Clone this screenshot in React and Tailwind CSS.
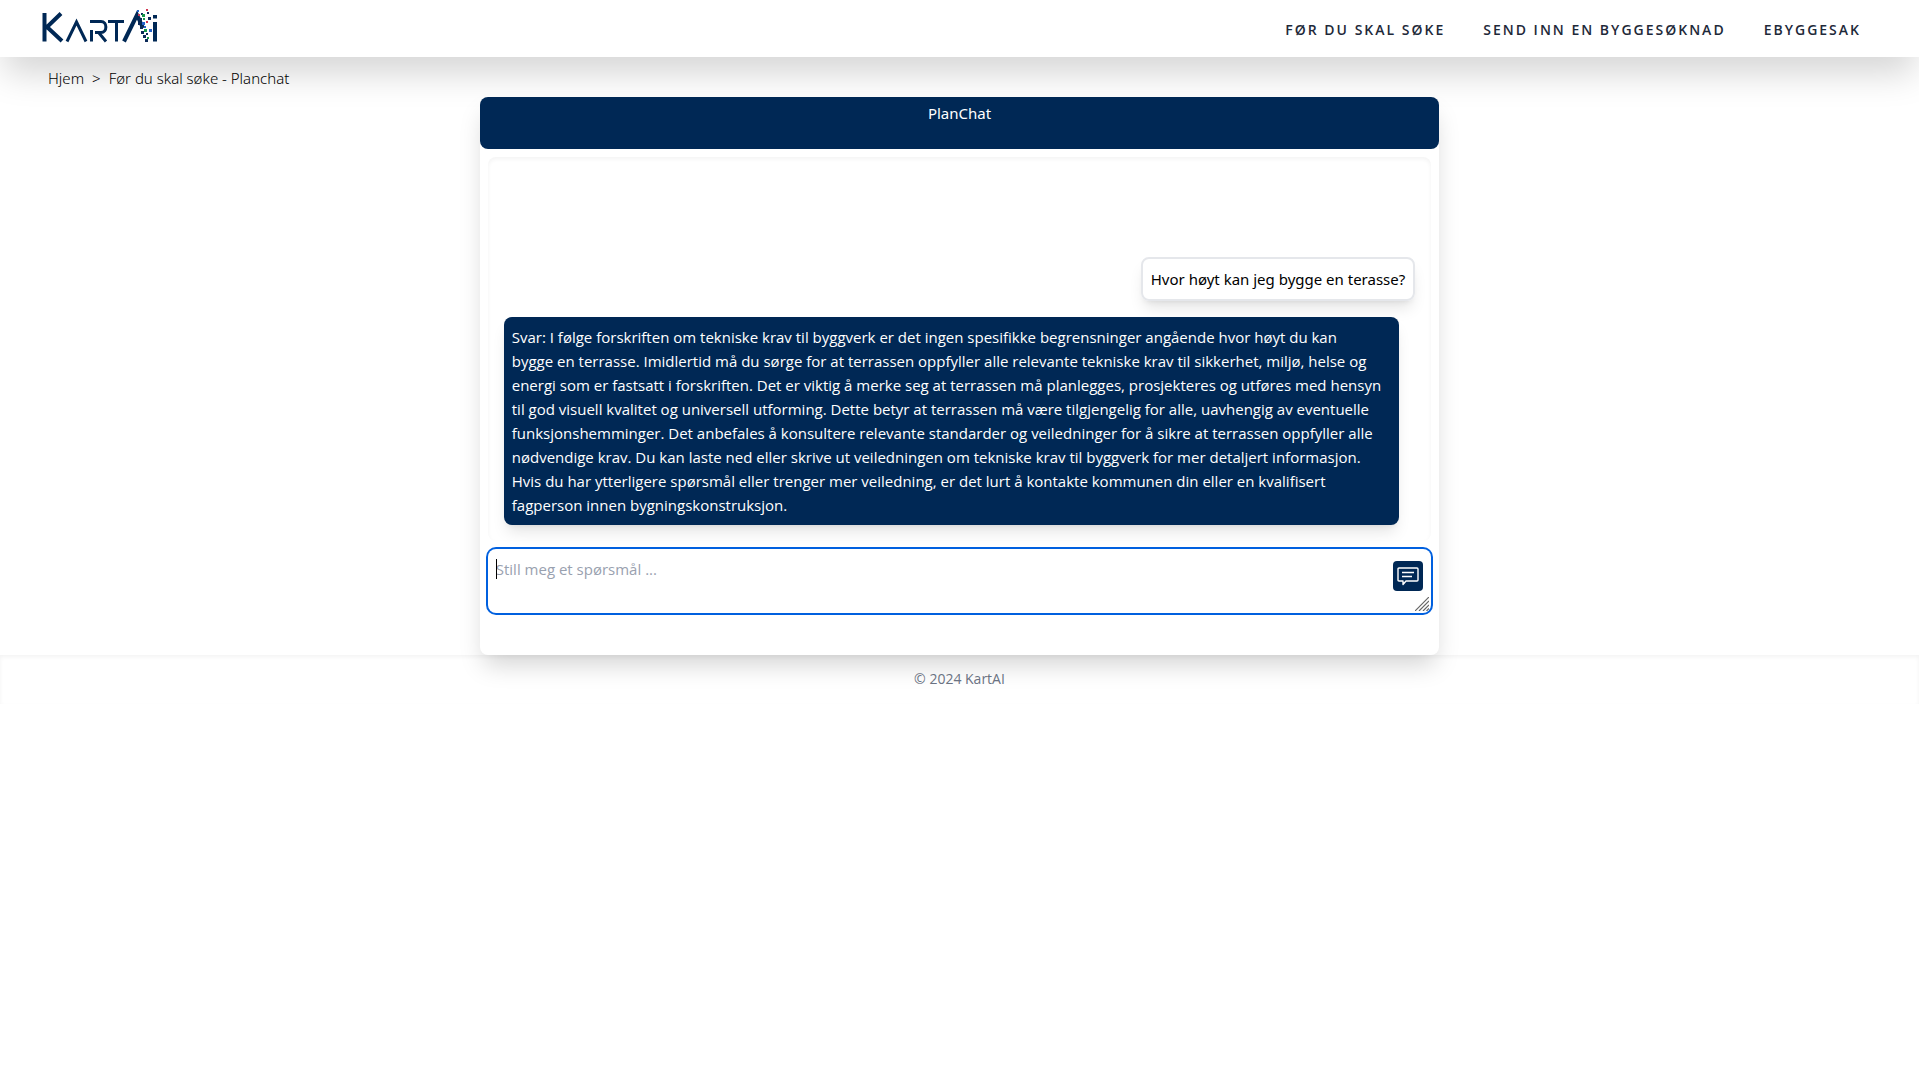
import React, { useState } from "react";

const links = ["Før du skal søke", "Send inn en byggesøknad", "eByggesak"];

const answer = [
  "Svar: I følge forskriften om tekniske krav til byggverk er det ingen spesifikke begrensninger angående hvor høyt du kan",
  "bygge en terrasse. Imidlertid må du sørge for at terrassen oppfyller alle relevante tekniske krav til sikkerhet, miljø, helse og",
  "energi som er fastsatt i forskriften. Det er viktig å merke seg at terrassen må planlegges, prosjekteres og utføres med hensyn",
  "til god visuell kvalitet og universell utforming. Dette betyr at terrassen må være tilgjengelig for alle, uavhengig av eventuelle",
  "funksjonshemminger. Det anbefales å konsultere relevante standarder og veiledninger for å sikre at terrassen oppfyller alle",
  "nødvendige krav. Du kan laste ned eller skrive ut veiledningen om tekniske krav til byggverk for mer detaljert informasjon.",
  "Hvis du har ytterligere spørsmål eller trenger mer veiledning, er det lurt å kontakte kommunen din eller en kvalifisert",
  "fagperson innen bygningskonstruksjon.",
];

const dots = [
  [137, 10, 2, "#2563c9"], [141, 13, 2, "#0b2a58"], [146, 9, 2, "#d0344f"], [138, 14, 2, "#c23b5a"],
  [142, 14, 3, "#15964a"], [147, 12, 2, "#0b2a58"], [139, 18, 3, "#0b2a58"], [143, 18, 2, "#15964a"],
  [148, 17, 3, "#0b2a58"], [138, 22, 3, "#0b2a58"], [142, 22, 3, "#2563c9"], [146, 21, 2, "#d0344f"],
  [140, 26, 3, "#0b2a58"], [144, 26, 2, "#2563c9"], [144, 29, 3, "#15964a"], [149, 29, 3, "#2563c9"],
  [141, 31, 3, "#0b2a58"], [146, 33, 2, "#0b2a58"], [143, 35, 3, "#0b2a58"], [147, 37, 2, "#15964a"],
  [145, 39, 3, "#0b2a58"],
];

function Logo() {
  return (
    <svg width="116" height="49" viewBox="42 4 116 49" role="img" aria-label="KartAI">
      <g fill="none" stroke="#002855" strokeWidth="3">
        <path d="M44.500 13V41.500M61 13.500L47 27L62 41" strokeWidth="4" />
        <path d="M67 41.500L76.500 22L86 41.500M91.500 41.500V30M90 21.500H101C107.500 21.500 107.500 32.500 101 32.500H95M99 33L106 41.500M108 21.500H124M116.500 21.500V41.500" />
        <path d="M124 41.500L137 15L143 28" strokeWidth="4" />
        <path d="M155 22V41.500M155 15V18.500" strokeWidth="4" />
      </g>
      {dots.map(([x, y, s, c]) => <rect key={x + "-" + y} x={x} y={y} width={s} height={s} fill={c} />)}
    </svg>
  );
}

export default function App() {
  const [text, setText] = useState("");
  return (
    <div className="bg-white font-['Noto_Sans','Open_Sans',sans-serif] text-[15px] leading-6 text-black">
      <header className="flex h-[57px] items-center justify-between pr-[58px] pl-[42px] shadow-[0_20px_35px_-4px_rgb(0_0_0/0.17)]">
        <a href="#"><Logo /></a>
        <nav className="flex gap-[38px] pt-0.5 font-['Open_Sans',sans-serif] text-sm font-semibold tracking-[2px] text-gray-800 uppercase">
          {links.map((l) => <a key={l} href="#">{l}</a>)}
        </nav>
      </header>
      <nav aria-label="Brødsmuler" className="flex h-10 items-center gap-2 px-12 pt-0.5 font-light">
        <a href="#">Hjem</a>
        <span>&gt;</span>
        <a href="#">Før du skal søke - Planchat</a>
      </nav>
      <main className="mx-auto w-1/2 rounded-lg pb-[42px] shadow-[0_14px_24px_-4px_rgb(0_0_0/0.17)]">
        <h1 className="h-[52px] rounded-lg bg-[#002855] pt-1 text-center text-white">PlanChat</h1>
        <section className="m-2 flex min-h-96 flex-col justify-end gap-4 rounded-lg p-4 shadow-inner">
          <p className="self-end rounded-lg border-2 border-gray-200 p-2 shadow-lg">Hvor høyt kan jeg bygge en terasse?</p>
          <p className="mr-4 rounded-lg bg-[#002855] p-2 font-['Open_Sans',sans-serif] text-white shadow-lg">
            {answer.map((line) => <span key={line} className="block">{line}</span>)}
          </p>
        </section>
        <form className="relative mx-2" onSubmit={(e) => e.preventDefault()}>
          <textarea
            aria-label="Still meg et spørsmål"
            placeholder="Still meg et spørsmål ..."
            value={text}
            onChange={(e) => setText(e.target.value)}
            className="block h-16 w-full resize-none rounded-lg p-2 font-['Open_Sans',sans-serif] ring-2 ring-[#0060df] outline-none placeholder:text-gray-400"
          />
          {!text && <span aria-hidden="true" className="pointer-events-none absolute top-2.5 left-2 h-5 w-px bg-black" />}
          <button aria-label="Send" className="absolute top-3 right-2 flex size-[30px] items-center justify-center rounded bg-[#002855]">
            <svg width="22" height="19" viewBox="0 0 22 19" fill="none" stroke="white" strokeWidth="1.400" strokeLinejoin="round">
              <path d="M2 1H20Q21 1 21 2V13Q21 14 20 14H9L6 17.500V14H2Q1 14 1 13V2Q1 1 2 1Z" />
              <path d="M5 5.500H17M5 9.500H15" />
            </svg>
          </button>
          <svg aria-hidden="true" className="pointer-events-none absolute right-0.5 bottom-0.5" width="14" height="14" viewBox="0 0 14 14" stroke="#666" strokeWidth="1.200">
            <path d="M0 14L14 0M4 14L14 4M8 14L14 8M11.500 14L14 11.500" />
          </svg>
        </form>
      </main>
      <footer className="h-[49px] pt-3 text-center font-['Open_Sans',sans-serif] text-sm leading-6 text-gray-500 shadow-inner">© 2024 KartAI</footer>
    </div>
  );
}
